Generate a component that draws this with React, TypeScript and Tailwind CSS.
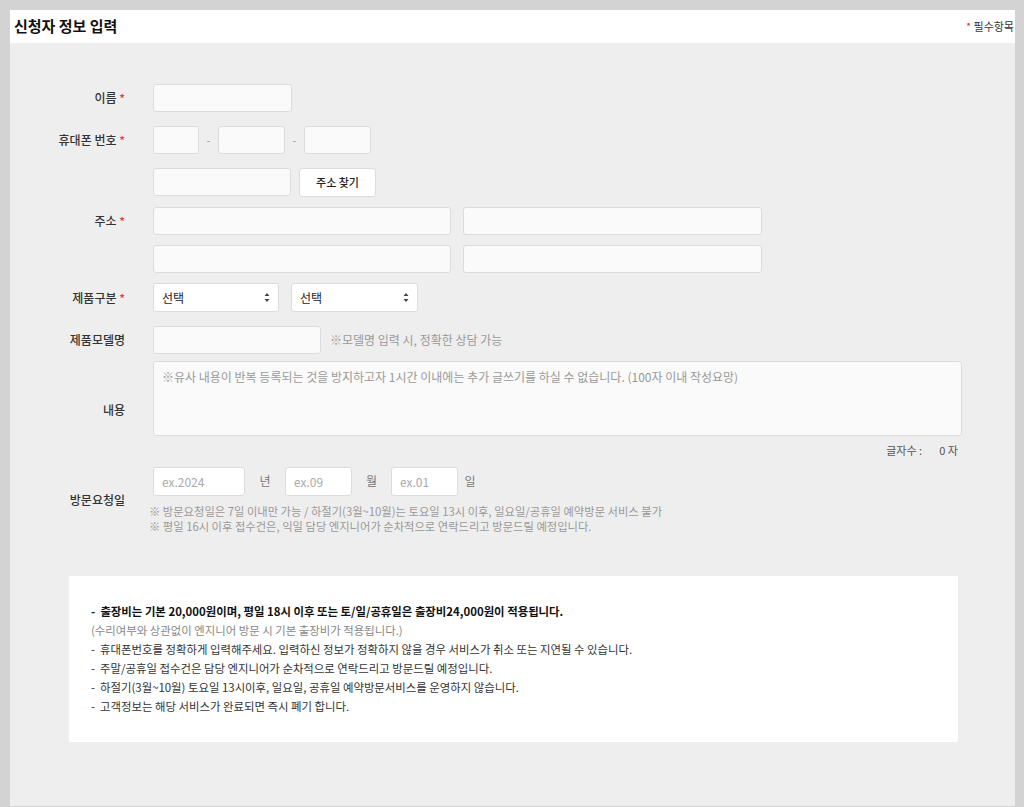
const inp = "h-[28px] rounded-[3px] border border-[#dcdcdc] bg-[#fafafa] px-2 text-[12px] outline-none placeholder:text-[#aaa]";

function Label({ text, req }: { text: string; req?: boolean }) {
  return (
    <div className="w-[125px] shrink-0 pr-0 text-right text-[12px] font-medium text-[#333]">
      {text}
      {req && <span className="text-[#e63b3b]"> *</span>}
    </div>
  );
}

function Select({ w }: { w: string }) {
  return (
    <div className={`${w} flex h-[29px] items-center justify-between rounded-[3px] border border-[#dcdcdc] bg-white px-2 text-[12px] text-[#222]`}>
      <span>선택</span>
      <svg width="6" height="11" viewBox="0 0 6 11"><path d="M3 1 L5.5 4 H0.5Z M3 10 L5.5 7 H0.5Z" fill="#444" /></svg>
    </div>
  );
}

export default function App() {
  return (
    <div className="min-h-[807px] w-[1024px] bg-[#d3d3d3] p-[8px] pt-[10px] pb-[7px]" style={{ fontFamily: '"Noto Sans CJK KR", "Noto Sans", sans-serif' }}>
      <div className="ml-[2px] w-[1005px] bg-[#efeeee] pb-[64px]">
        <div className="flex h-[33px] items-center justify-between bg-white pl-[4px] pr-[1px]">
          <h1 className="text-[15px] font-bold text-[#111]">신청자 정보 입력</h1>
          <span className="text-[11px] text-[#333]"><span className="text-[#e63b3b]">*</span> 필수항목</span>
        </div>

        <div className="pt-[41px] pl-0">
          <div className="flex items-center gap-[28px] -ml-[10px]">
            <Label text="이름" req />
            <input className={`${inp} w-[139px]`} />
          </div>
          <div className="mt-[14px] flex items-center gap-[28px] -ml-[10px]">
            <Label text="휴대폰 번호" req />
            <div className="flex items-center">
              <input className={`${inp} w-[46px]`} />
              <span className="w-[19px] text-center text-[11px] text-[#999]">-</span>
              <input className={`${inp} w-[67px]`} />
              <span className="w-[19px] text-center text-[11px] text-[#999]">-</span>
              <input className={`${inp} w-[67px]`} />
            </div>
          </div>
          <div className="mt-[14px] flex items-center gap-[28px] -ml-[10px]">
            <Label text="주소" req />
            <div className="flex flex-col gap-[10px]">
              <div className="flex gap-[8px]">
                <input className={`${inp} w-[138px]`} />
                <button className="h-[29px] w-[77px] rounded-[3px] border border-[#dcdcdc] bg-white text-[11px] font-medium text-[#222]">주소 찾기</button>
              </div>
              <div className="flex gap-[12px]">
                <input className={`${inp} w-[298px]`} />
                <input className={`${inp} w-[299px]`} />
              </div>
              <div className="flex gap-[12px]">
                <input className={`${inp} w-[298px]`} />
                <input className={`${inp} w-[299px]`} />
              </div>
            </div>
          </div>
          <div className="mt-[10px] flex items-center gap-[28px] -ml-[10px]">
            <Label text="제품구분" req />
            <div className="flex gap-[12px]">
              <Select w="w-[126px]" />
              <Select w="w-[127px]" />
            </div>
          </div>
          <div className="mt-[14px] flex items-center gap-[28px] -ml-[10px]">
            <Label text="제품모델명" />
            <div className="flex items-center gap-[9px]">
              <input className={`${inp} w-[168px]`} />
              <span className="text-[12px] text-[#999]">※모델명 입력 시, 정확한 상담 가능</span>
            </div>
          </div>
          <div className="mt-[7px] flex items-center gap-[28px] -ml-[10px]">
            <Label text="내용" />
            <div>
              <textarea className="block h-[75px] w-[809px] resize-none rounded-[3px] border border-[#dcdcdc] bg-[#fafafa] px-2 py-[6px] text-[12px] outline-none placeholder:text-[#999]" placeholder="※유사 내용이 반복 등록되는 것을 방지하고자 1시간 이내에는 추가 글쓰기를 하실 수 없습니다. (100자 이내 작성요망)" />
              <div className="mt-[6px] pr-[4px] text-right text-[11px] text-[#555]">글자수 :&nbsp;&nbsp;&nbsp;&nbsp;&nbsp;&nbsp;&nbsp;0 자</div>
            </div>
          </div>
          <div className="mt-[8px] flex items-center gap-[28px] -ml-[10px]">
            <Label text="방문요청일" />
            <div>
              <div className="flex items-center text-[12px] text-[#777]">
                <input className={`${inp} h-[29px] w-[92px] bg-white`} placeholder="ex.2024" />
                <span className="w-[40px] text-center">년</span>
                <input className={`${inp} h-[29px] w-[67px] bg-white`} placeholder="ex.09" />
                <span className="w-[39px] text-center">월</span>
                <input className={`${inp} h-[29px] w-[67px] bg-white`} placeholder="ex.01" />
                <span className="w-[24px] text-center">일</span>
              </div>
              <div className="mt-[8px] -ml-[4px] text-[11.3px] leading-[15px] text-[#999]">
                <p>※ 방문요청일은 7일 이내만 가능 / 하절기(3월~10월)는 토요일 13시 이후, 일요일/공휴일 예약방문 서비스 불가</p>
                <p>※ 평일 16시 이후 접수건은, 익일 담당 엔지니어가 순차적으로 연락드리고 방문드릴 예정입니다.</p>
              </div>
            </div>
          </div>
        </div>

        <div className="ml-[59px] mt-[42px] w-[889px] bg-white px-[22px] pb-[26px] pt-[26px] text-[11.4px] leading-[19px] text-[#333]">
          <p className="font-bold text-[#111]">-&nbsp;&nbsp;출장비는 기본 20,000원이며, 평일 18시 이후 또는 토/일/공휴일은 출장비24,000원이 적용됩니다.</p>
          <p className="text-[#888]">(수리여부와 상관없이 엔지니어 방문 시 기본 출장비가 적용됩니다.)</p>
          <p>-&nbsp;&nbsp;휴대폰번호를 정확하게 입력해주세요. 입력하신 정보가 정확하지 않을 경우 서비스가 취소 또는 지연될 수 있습니다.</p>
          <p>-&nbsp;&nbsp;주말/공휴일 접수건은 담당 엔지니어가 순차적으로 연락드리고 방문드릴 예정입니다.</p>
          <p>-&nbsp;&nbsp;하절기(3월~10월) 토요일 13시이후, 일요일, 공휴일 예약방문서비스를 운영하지 않습니다.</p>
          <p>-&nbsp;&nbsp;고객정보는 해당 서비스가 완료되면 즉시 폐기 합니다.</p>
        </div>
      </div>
    </div>
  );
}
